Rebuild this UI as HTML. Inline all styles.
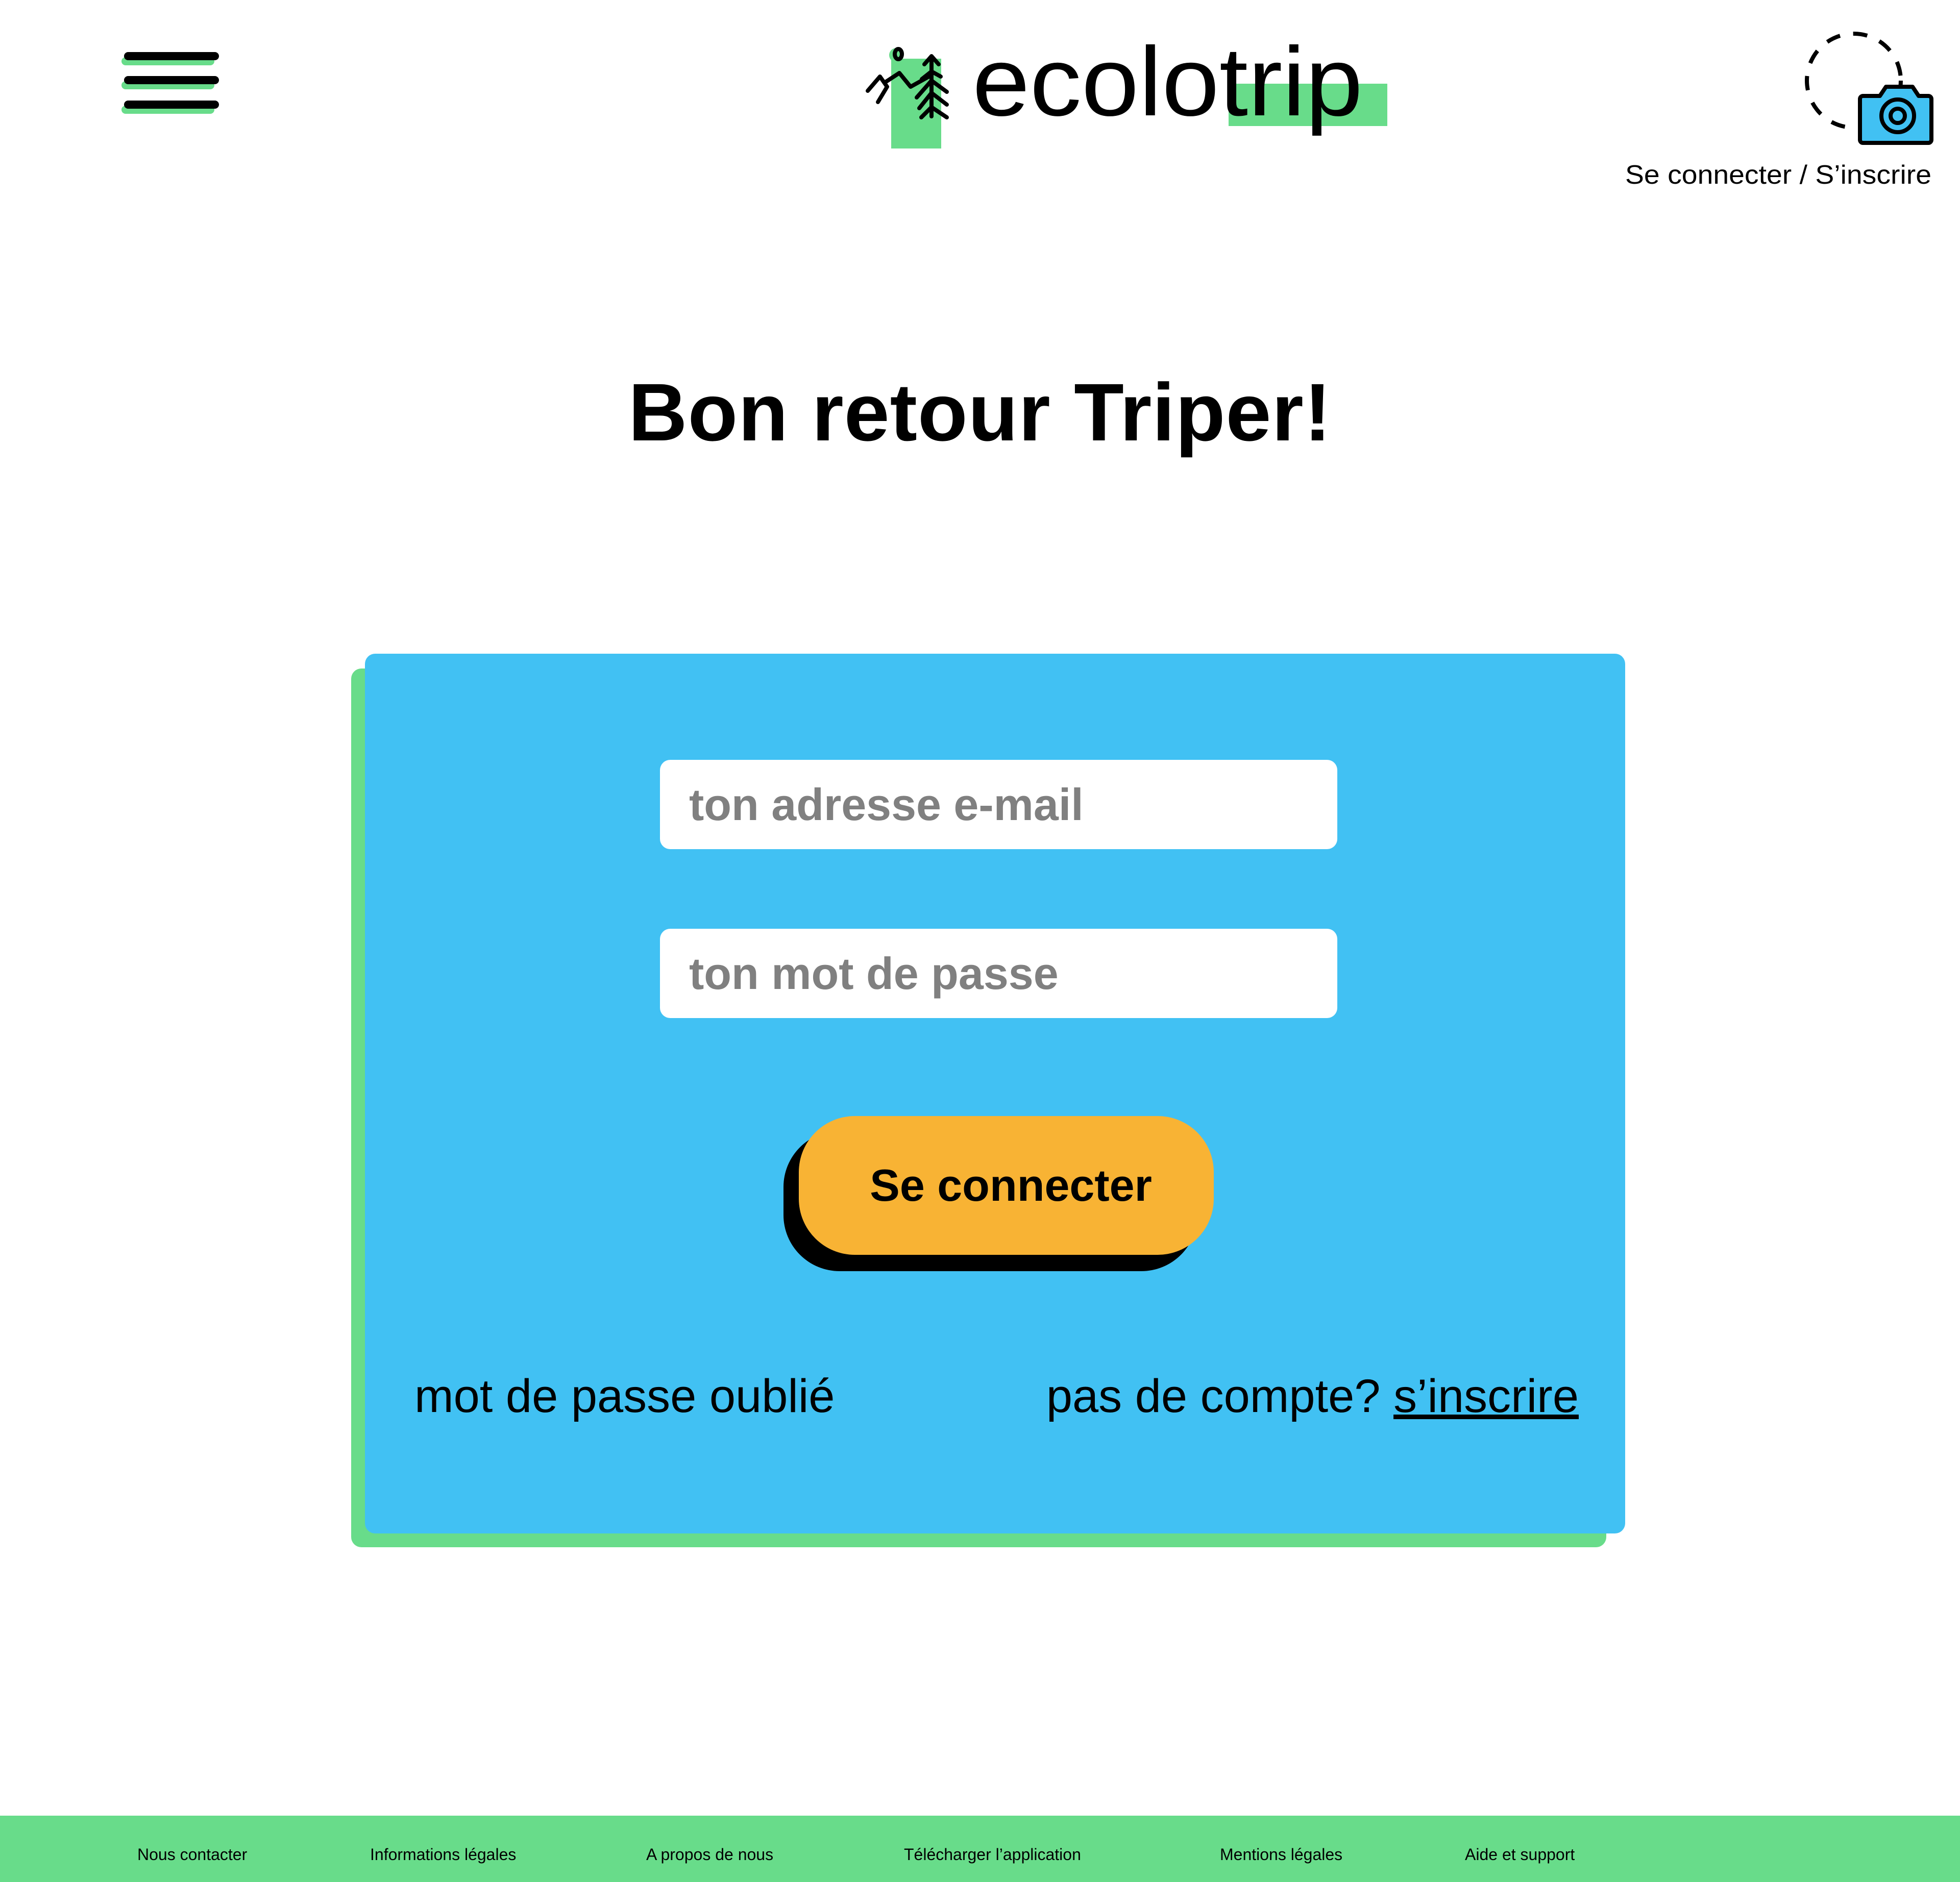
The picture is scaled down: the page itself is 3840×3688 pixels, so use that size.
<!DOCTYPE html>
<html><head><meta charset="utf-8"><style>
*{margin:0;padding:0;box-sizing:border-box}
body{width:3840px;height:3688px;background:#fff;position:relative;overflow:hidden;font-family:"Liberation Sans",sans-serif;color:#000}
.a{position:absolute}
.bar{position:absolute;height:16px;border-radius:8px}
.inp{position:absolute;background:#fff;border-radius:20px;left:1293px;width:1327px;height:175px;color:#808080;font-size:88px;font-weight:bold;padding-left:57px;line-height:175px}
.f{position:absolute;top:3616px;font-size:32px;white-space:nowrap}
</style></head><body>
<div class="bar" style="left:238px;top:112px;width:182px;background:#68dc8a"></div>
<div class="bar" style="left:243px;top:102px;width:186px;background:#000"></div>
<div class="bar" style="left:238px;top:159px;width:182px;background:#68dc8a"></div>
<div class="bar" style="left:243px;top:149px;width:186px;background:#000"></div>
<div class="bar" style="left:238px;top:207px;width:182px;background:#68dc8a"></div>
<div class="bar" style="left:243px;top:197px;width:186px;background:#000"></div>

<svg class="a" style="left:0;top:0" width="3840" height="400">
<rect x="1746" y="115" width="98" height="176" fill="#68dc8a"/>
<circle cx="1756" cy="108" r="14" fill="#68dc8a"/>
<rect x="2407" y="164" width="311" height="83" fill="#68dc8a"/>
<g stroke="#000" stroke-width="8" fill="none" stroke-linecap="round" stroke-linejoin="round">
<ellipse cx="1760" cy="106" rx="7" ry="10"/>
<line x1="1825" y1="112" x2="1825" y2="228"/>
<polyline points="1811,126 1825,110 1839,126"/>
<polyline points="1806,155 1825,140 1843,150"/>
<polyline points="1796,191 1825,158 1855,180"/>
<polyline points="1801,212 1825,182 1855,205"/>
<polyline points="1805,230 1825,210 1855,230"/>
<polyline points="1700,178 1724,150 1738,170 1720,200"/>
<polyline points="1733,162 1762,143 1784,170 1820,150"/>
</g>
<text x="1905" y="226" font-family="Liberation Sans" font-size="192" textLength="765" lengthAdjust="spacingAndGlyphs">ecolotrip</text>
<circle cx="3632" cy="158" r="92" fill="none" stroke="#000" stroke-width="8" stroke-dasharray="28 26"/>
<path d="M3653 188 h30 l12-18 h52 l12 18 h19 a6 6 0 0 1 6 6 v80 a6 6 0 0 1 -6 6 h-128 a6 6 0 0 1 -6 -6 v-80 a6 6 0 0 1 6 -6z" fill="#41c1f3" stroke="#000" stroke-width="8" stroke-linejoin="round"/>
<circle cx="3718" cy="227" r="32" fill="none" stroke="#000" stroke-width="8"/>
<circle cx="3718" cy="227" r="14" fill="none" stroke="#000" stroke-width="8"/>
<text x="3184" y="360" font-family="Liberation Sans" font-size="52" textLength="600" lengthAdjust="spacingAndGlyphs">Se connecter / S’inscrire</text>
</svg>

<div class="a" style="left:0;width:3840px;top:716px;text-align:center;font-size:160px;font-weight:bold;letter-spacing:1px">Bon retour Triper!</div>

<div class="a" style="left:688px;top:1310px;width:2459px;height:1722px;background:#68dc8a;border-radius:20px"></div>
<div class="a" style="left:715px;top:1281px;width:2469px;height:1724px;background:#41c1f3;border-radius:20px"></div>
<div class="inp" style="top:1489px">ton adresse e-mail</div>
<div class="inp" style="top:1820px">ton mot de passe</div>
<div class="a" style="left:1535px;top:2216px;width:811px;height:275px;background:#000;border-radius:110px"></div>
<div class="a" style="left:1565px;top:2187px;width:813px;height:272px;background:#f8b334;border-radius:110px;text-align:center;line-height:272px;font-size:88px;font-weight:bold;padding-left:18px">Se connecter</div>
<div class="a" style="left:812px;top:2684px;font-size:92px;white-space:nowrap">mot de passe oublié</div>
<div class="a" style="right:747px;top:2684px;font-size:92px;white-space:nowrap">pas de compte? <span style="text-decoration:underline">s’inscrire</span></div>

<div class="a" style="left:0;top:3558px;width:3840px;height:130px;background:#68dc8a"></div>
<div class="f" style="left:269px">Nous contacter</div>
<div class="f" style="left:725px">Informations légales</div>
<div class="f" style="left:1266px">A propos de nous</div>
<div class="f" style="left:1771px">Télécharger l’application</div>
<div class="f" style="left:2390px">Mentions légales</div>
<div class="f" style="left:2870px">Aide et support</div>
</body></html>
